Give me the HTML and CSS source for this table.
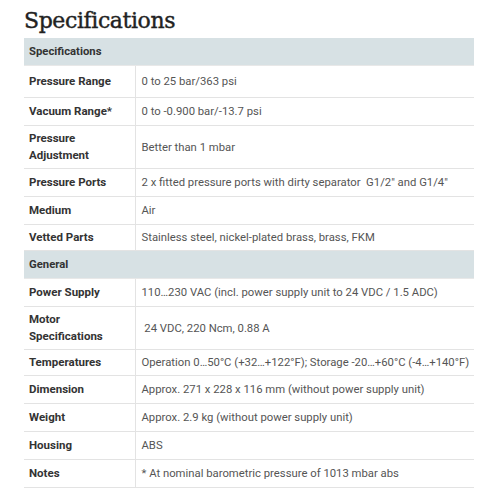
FILE: index.html
```html
<!DOCTYPE html>
<html>
<head>
<meta charset="utf-8">
<link rel="stylesheet" href="styles.css">
</head>
<body>
<div class="page">
  <h1 class="title">Specifications</h1>
  <table class="specs">
    <colgroup><col class="c1"><col class="c2"></colgroup>
    <tr class="group"><th colspan="2">Specifications</th></tr>
    <tr class="first"><td class="k">Pressure Range</td><td class="v">0 to 25 bar/363 psi</td></tr>
    <tr><td class="k">Vacuum Range*</td><td class="v">0 to -0.900 bar/-13.7 psi</td></tr>
    <tr class="tall"><td class="k">Pressure<br>Adjustment</td><td class="v">Better than 1 mbar</td></tr>
    <tr><td class="k">Pressure Ports</td><td class="v">2 x fitted pressure ports with dirty separator&nbsp; G1/2" and G1/4"</td></tr>
    <tr><td class="k">Medium</td><td class="v">Air</td></tr>
    <tr class="short"><td class="k">Vetted Parts</td><td class="v">Stainless steel, nickel-plated brass, brass, FKM</td></tr>
    <tr class="group"><th colspan="2">General</th></tr>
    <tr><td class="k">Power Supply</td><td class="v">110…230 VAC (incl. power supply unit to 24 VDC / 1.5 ADC)</td></tr>
    <tr class="tall"><td class="k">Motor<br>Specifications</td><td class="v">&nbsp;24 VDC, 220 Ncm, 0.88 A</td></tr>
    <tr class="short"><td class="k">Temperatures</td><td class="v">Operation 0…50°C (+32…+122°F); Storage -20…+60°C (-4…+140°F)</td></tr>
    <tr><td class="k">Dimension</td><td class="v">Approx. 271 x 228 x 116 mm (without power supply unit)</td></tr>
    <tr><td class="k">Weight</td><td class="v">Approx. 2.9 kg (without power supply unit)</td></tr>
    <tr><td class="k">Housing</td><td class="v">ABS</td></tr>
    <tr><td class="k">Notes</td><td class="v">* At nominal barometric pressure of 1013 mbar abs</td></tr>
  </table>
</div>
</body>
</html>
```

FILE: styles.css
```css
html, body {
  margin: 0;
  padding: 0;
  background: #ffffff;
}
.page {
  padding: 5px 26px 0 24px;
  font-family: Roboto, "Liberation Sans", sans-serif;
}
.title {
  margin: 0;
  height: 33px;
  font-family: "DejaVu Serif", serif;
  font-weight: normal;
  font-size: 22px;
  line-height: 32px;
  color: #222;
  letter-spacing: -0.4px;
  -webkit-text-stroke: 0.4px #222;
}
.specs {
  width: 450px;
  table-layout: fixed;
  border-collapse: collapse;
  font-size: 11.3px;
  color: #444;
}
.specs .c1 {
  width: 111px;
}
.specs th {
  background: #d7e1e4;
  text-align: left;
  font-weight: bold;
  color: #333;
  height: 27px;
  padding: 0 5px;
  border-bottom: 1px solid #e8e8e8;
}
.specs td {
  height: 27px;
  padding: 0 5px;
  border-bottom: 1px solid #e3e3e3;
  line-height: 17px;
}
.specs tr.first td {
  height: 31px;
}
.specs tr.short td {
  height: 25px;
}
.specs tr.tall td {
  height: 42px;
}
.specs .k {
  font-weight: bold;
  font-size: 11.5px;
  color: #333;
  border-right: 1px solid #e3e3e3;
}
.specs .v {
  padding: 0 0 0 6px;
  white-space: nowrap;
  overflow: visible;
  color: #555;
}
```
